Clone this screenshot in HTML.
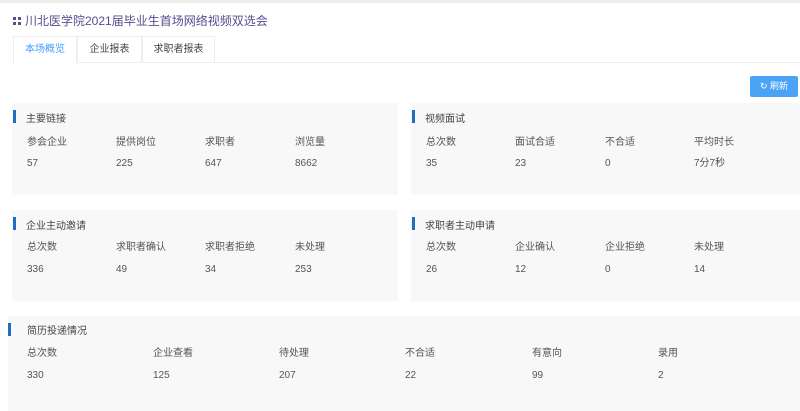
<!DOCTYPE html>
<html><head><meta charset="utf-8"><style>
*{margin:0;padding:0;box-sizing:border-box}
body{width:800px;height:405px;overflow:hidden;background:#fff;font-family:"Liberation Sans","Noto Sans CJK SC",sans-serif;color:#555;font-size:10px;position:relative}
.topline{position:absolute;left:0;top:0;width:800px;height:3px;background:#eee}
.title{position:absolute;left:13px;top:14px;font-size:12px;color:#5b4a8c;line-height:14px}
.title i{display:inline-block;width:8px;height:8px;margin-right:4px;vertical-align:0;background:
linear-gradient(#5b4a8c,#5b4a8c) 0 0/3px 3px no-repeat,linear-gradient(#5b4a8c,#5b4a8c) 5px 0/3px 3px no-repeat,linear-gradient(#5b4a8c,#5b4a8c) 0 5px/3px 3px no-repeat,linear-gradient(#5b4a8c,#5b4a8c) 5px 5px/3px 3px no-repeat}
.tabs{position:absolute;left:13px;top:36px;height:27px;width:787px;border-bottom:1px solid #eee}
.tab{position:absolute;top:0;height:27px;line-height:26px;text-align:center;border:1px solid #eee;border-bottom:none;color:#444;font-size:10px}
.tab.a{color:#409eff;background:#fff;height:28px}
.btn{position:absolute;left:750px;top:76px;width:48px;height:21px;background:#4aa3f5;border-radius:2px;color:#fff;font-size:9px;line-height:21px;text-align:center}
.card{position:absolute;background:#f8f8f8}
.card .h{position:absolute;left:14px;top:11px;font-size:10px;color:#444;line-height:12px}
.card .bar{position:absolute;left:1px;top:7px;width:3px;height:13px;background:#1f6fc0}
.c{position:absolute;font-size:10px;color:#555;line-height:12px;white-space:nowrap}
</style></head><body>
<div class="topline"></div>
<div class="title"><i></i>川北医学院2021届毕业生首场网络视频双选会</div>
<div class="tabs">
<div class="tab a" style="left:0;width:64px">本场概览</div>
<div class="tab" style="left:64px;width:65px">企业报表</div>
<div class="tab" style="left:129px;width:73px">求职者报表</div>
</div>
<div class="btn">↻ 刷新</div>

<div class="card" style="left:12px;top:103px;width:386px;height:92px"><div class="bar"></div><div class="h">主要链接</div>
<div class="c" style="left:15px;top:34px">参会企业</div><div class="c" style="left:104px;top:34px">提供岗位</div><div class="c" style="left:193px;top:34px">求职者</div><div class="c" style="left:283px;top:34px">浏览量</div>
<div class="c" style="left:15px;top:55px">57</div><div class="c" style="left:104px;top:55px">225</div><div class="c" style="left:193px;top:55px">647</div><div class="c" style="left:283px;top:55px">8662</div></div>

<div class="card" style="left:411px;top:103px;width:389px;height:92px"><div class="bar"></div><div class="h">视频面试</div>
<div class="c" style="left:15px;top:34px">总次数</div><div class="c" style="left:104px;top:34px">面试合适</div><div class="c" style="left:194px;top:34px">不合适</div><div class="c" style="left:283px;top:34px">平均时长</div>
<div class="c" style="left:15px;top:55px">35</div><div class="c" style="left:104px;top:55px">23</div><div class="c" style="left:194px;top:55px">0</div><div class="c" style="left:283px;top:55px">7分7秒</div></div>

<div class="card" style="left:12px;top:210px;width:386px;height:91px"><div class="bar"></div><div class="h">企业主动邀请</div>
<div class="c" style="left:15px;top:32px">总次数</div><div class="c" style="left:104px;top:32px">求职者确认</div><div class="c" style="left:193px;top:32px">求职者拒绝</div><div class="c" style="left:283px;top:32px">未处理</div>
<div class="c" style="left:15px;top:54px">336</div><div class="c" style="left:104px;top:54px">49</div><div class="c" style="left:193px;top:54px">34</div><div class="c" style="left:283px;top:54px">253</div></div>

<div class="card" style="left:411px;top:210px;width:389px;height:91px"><div class="bar"></div><div class="h">求职者主动申请</div>
<div class="c" style="left:15px;top:32px">总次数</div><div class="c" style="left:104px;top:32px">企业确认</div><div class="c" style="left:194px;top:32px">企业拒绝</div><div class="c" style="left:283px;top:32px">未处理</div>
<div class="c" style="left:15px;top:54px">26</div><div class="c" style="left:104px;top:54px">12</div><div class="c" style="left:194px;top:54px">0</div><div class="c" style="left:283px;top:54px">14</div></div>

<div class="card" style="left:8px;top:316px;width:792px;height:95px"><div class="bar" style="left:0"></div><div class="h" style="left:19px;top:10px">简历投递情况</div>
<div class="c" style="left:19px;top:32px">总次数</div><div class="c" style="left:145px;top:32px">企业查看</div><div class="c" style="left:271px;top:32px">待处理</div><div class="c" style="left:397px;top:32px">不合适</div><div class="c" style="left:524px;top:32px">有意向</div><div class="c" style="left:650px;top:32px">录用</div>
<div class="c" style="left:19px;top:54px">330</div><div class="c" style="left:145px;top:54px">125</div><div class="c" style="left:271px;top:54px">207</div><div class="c" style="left:397px;top:54px">22</div><div class="c" style="left:524px;top:54px">99</div><div class="c" style="left:650px;top:54px">2</div></div>
</body></html>
